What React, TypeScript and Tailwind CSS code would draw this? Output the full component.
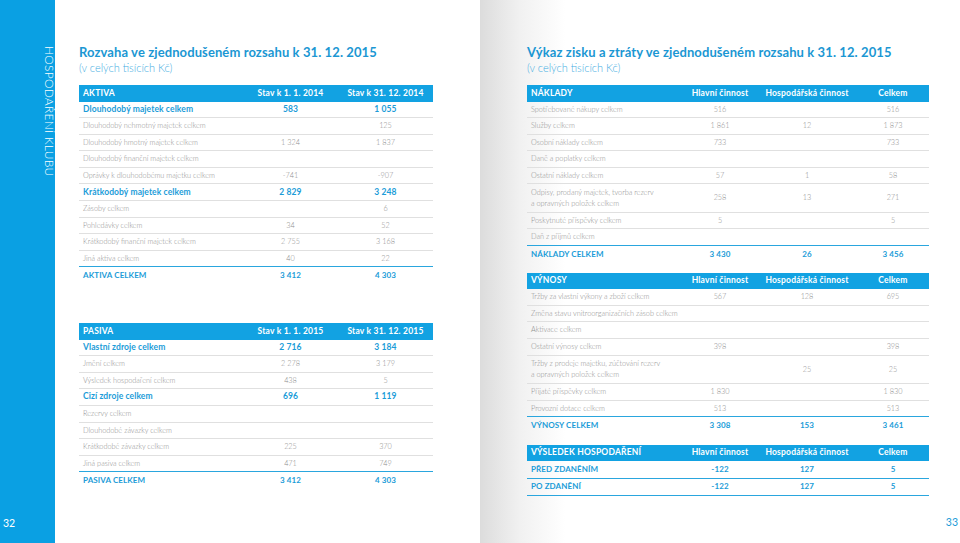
type Cell = string;

type RowProps = {
	cells: Cell[];
	cols: string;
	kind?: "head" | "bold" | "plain" | "total";
	line?: "gray" | "blue" | "none";
	size?: string;
};

const Row: React.FC<RowProps> = ({ cells, cols, kind = "plain", line = "gray", size = "h-[16.6px]" }) => {
	const base =
		kind === "head"
			? "bg-[#12a2e2] text-white font-bold text-[8.5px] tracking-[0.2px]"
			: kind === "bold"
				? "text-[#1b9cd8] font-bold text-[8.5px] tracking-[0.1px]"
				: kind === "total"
					? "text-[#1b9cd8] font-bold uppercase text-[8px] tracking-[0.1px]"
					: "text-[#8e8e8e] font-light text-[7.3px]";
	const border =
		kind === "head"
			? ""
			: line === "blue"
				? "border-b-[1.5px] border-[#2aa6de]"
				: line === "gray"
					? "border-b border-[#e0e0e0]"
					: "";
	return (
		<div className={`grid ${cols} items-center leading-[11.5px] ${base} ${border} ${size}`}>
			{cells.map((c, i) => (
				<div key={i} className={i === 0 ? "pl-[4px] whitespace-nowrap" : "text-center whitespace-nowrap"}>
					{c.split("\n").map((part, j) => (
						<div key={j}>{part}</div>
					))}
				</div>
			))}
		</div>
	);
};

const leftCols = "grid-cols-[1fr_95px_95px]";
const rightCols = "grid-cols-[1fr_74px_100px_72px]";

const Heading: React.FC<{ title: string }> = ({ title }) => (
	<div className="mb-[9px]">
		<h1 className="text-[13px] leading-[16px] font-bold tracking-[0.1px] text-[#1b97d3]">{title}</h1>
		<p className="text-[11px] leading-[16px] font-light text-[#3fade2]">(v celých tisících Kč)</p>
	</div>
);

export default function App() {
	return (
		<div className="flex w-[960px] h-[543px] overflow-hidden font-['Lato',sans-serif]">
			{/* left page */}
			<div className="flex w-[480px] h-full bg-white">
				<aside className="flex flex-col w-[55px] h-full bg-[#0aa0e3] text-white">
					<div className="mt-[46px] ml-[34px] [writing-mode:vertical-rl] text-[12px] font-light tracking-[0.25px] leading-none">
						HOSPODAŘENÍ KLUBU
					</div>
					<div className="mt-auto mb-[15px] ml-[3px] text-[10.5px] leading-none">32</div>
				</aside>
				<main className="pl-[24px] pt-[44px] w-[378px]">
					<Heading title="Rozvaha ve zjednodušeném rozsahu k 31. 12. 2015" />
					<div className="w-[354px]">
						<Row kind="head" size="h-[16.5px]" cols={leftCols} cells={["AKTIVA", "Stav k 1. 1. 2014", "Stav k 31. 12. 2014"]} />
						<Row kind="bold" cols={leftCols} cells={["Dlouhodobý majetek celkem", "583", "1 055"]} />
						<Row cols={leftCols} cells={["Dlouhodobý nehmotný majetek celkem", "", "125"]} />
						<Row cols={leftCols} cells={["Dlouhodobý hmotný majetek celkem", "1 324", "1 837"]} />
						<Row cols={leftCols} cells={["Dlouhodobý finanční majetek celkem", "", ""]} />
						<Row cols={leftCols} cells={["Oprávky k dlouhodobému majetku celkem", "-741", "-907"]} />
						<Row kind="bold" cols={leftCols} cells={["Krátkodobý majetek celkem", "2 829", "3 248"]} />
						<Row cols={leftCols} cells={["Zásoby celkem", "", "6"]} />
						<Row cols={leftCols} cells={["Pohledávky celkem", "34", "52"]} />
						<Row cols={leftCols} cells={["Krátkodobý finanční majetek celkem", "2 755", "3 168"]} />
						<Row cols={leftCols} line="blue" cells={["Jiná aktiva celkem", "40", "22"]} />
						<Row kind="total" cols={leftCols} line="none" cells={["AKTIVA CELKEM", "3 412", "4 303"]} />
					</div>
					<div className="w-[354px] mt-[39px]">
						<Row kind="head" size="h-[16.5px]" cols={leftCols} cells={["PASIVA", "Stav k 1. 1. 2015", "Stav k 31. 12. 2015"]} />
						<Row kind="bold" cols={leftCols} cells={["Vlastní zdroje celkem", "2 716", "3 184"]} />
						<Row cols={leftCols} cells={["Jmění celkem", "2 278", "3 179"]} />
						<Row cols={leftCols} cells={["Výsledek hospodaření celkem", "438", "5"]} />
						<Row kind="bold" cols={leftCols} cells={["Cizí zdroje celkem", "696", "1 119"]} />
						<Row cols={leftCols} cells={["Rezervy celkem", "", ""]} />
						<Row cols={leftCols} cells={["Dlouhodobé závazky celkem", "", ""]} />
						<Row cols={leftCols} cells={["Krátkodobé závazky celkem", "225", "370"]} />
						<Row cols={leftCols} line="blue" cells={["Jiná pasiva celkem", "471", "749"]} />
						<Row kind="total" cols={leftCols} line="none" cells={["PASIVA CELKEM", "3 412", "4 303"]} />
					</div>
				</main>
			</div>

			{/* right page */}
			<div className="relative flex w-[480px] h-full bg-[linear-gradient(to_right,#dcdcdc_0px,#f1f1f1_40px,#ffffff_85px)]">
				<main className="pl-[47px] pt-[44px]">
					<Heading title="Výkaz zisku a ztráty ve zjednodušeném rozsahu k 31. 12. 2015" />
					<div className="w-[402px]">
						<Row kind="head" size="h-[16.5px]" cols={rightCols} cells={["NÁKLADY", "Hlavní činnost", "Hospodářská činnost", "Celkem"]} />
						<Row cols={rightCols} cells={["Spotřebované nákupy celkem", "516", "", "516"]} />
						<Row cols={rightCols} cells={["Služby celkem", "1 861", "12", "1 873"]} />
						<Row cols={rightCols} cells={["Osobní náklady celkem", "733", "", "733"]} />
						<Row cols={rightCols} cells={["Daně a poplatky celkem", "", "", ""]} />
						<Row cols={rightCols} cells={["Ostatní náklady celkem", "57", "1", "58"]} />
						<Row size="h-[28.3px]" cols={rightCols} cells={["Odpisy, prodaný majetek, tvorba rezerv\na opravných položek celkem", "258", "13", "271"]} />
						<Row cols={rightCols} cells={["Poskytnuté příspěvky celkem", "5", "", "5"]} />
						<Row cols={rightCols} line="blue" cells={["Daň z příjmů celkem", "", "", ""]} />
						<Row kind="total" cols={rightCols} line="none" cells={["NÁKLADY CELKEM", "3 430", "26", "3 456"]} />
					</div>
					<div className="w-[402px] mt-[10px]">
						<Row kind="head" size="h-[16.7px]" cols={rightCols} cells={["VÝNOSY", "Hlavní činnost", "Hospodářská činnost", "Celkem"]} />
						<Row cols={rightCols} cells={["Tržby za vlastní výkony a zboží celkem", "567", "128", "695"]} />
						<Row cols={rightCols} cells={["Změna stavu vnitroorganizačních zásob celkem", "", "", ""]} />
						<Row cols={rightCols} cells={["Aktivace celkem", "", "", ""]} />
						<Row cols={rightCols} cells={["Ostatní výnosy celkem", "398", "", "398"]} />
						<Row size="h-[28.3px]" cols={rightCols} cells={["Tržby z prodeje majetku, zúčtování rezerv\na opravných položek celkem", "", "25", "25"]} />
						<Row cols={rightCols} cells={["Přijaté příspěvky celkem", "1 830", "", "1 830"]} />
						<Row cols={rightCols} line="blue" cells={["Provozní dotace celkem", "513", "", "513"]} />
						<Row kind="total" cols={rightCols} line="none" cells={["VÝNOSY CELKEM", "3 308", "153", "3 461"]} />
					</div>
					<div className="w-[402px] mt-[11px]">
						<Row kind="head" size="h-[16.7px]" cols={rightCols} cells={["VÝSLEDEK HOSPODAŘENÍ", "Hlavní činnost", "Hospodářská činnost", "Celkem"]} />
						<Row kind="total" size="h-[17.6px]" cols={rightCols} line="blue" cells={["PŘED ZDANĚNÍM", "-122", "127", "5"]} />
						<Row kind="total" size="h-[17px]" cols={rightCols} line="blue" cells={["PO ZDANĚNÍ", "-122", "127", "5"]} />
					</div>
				</main>
				<div className="absolute right-[2px] bottom-[16px] text-[10.5px] leading-none text-[#1b9cd8]">33</div>
			</div>
		</div>
	);
}
